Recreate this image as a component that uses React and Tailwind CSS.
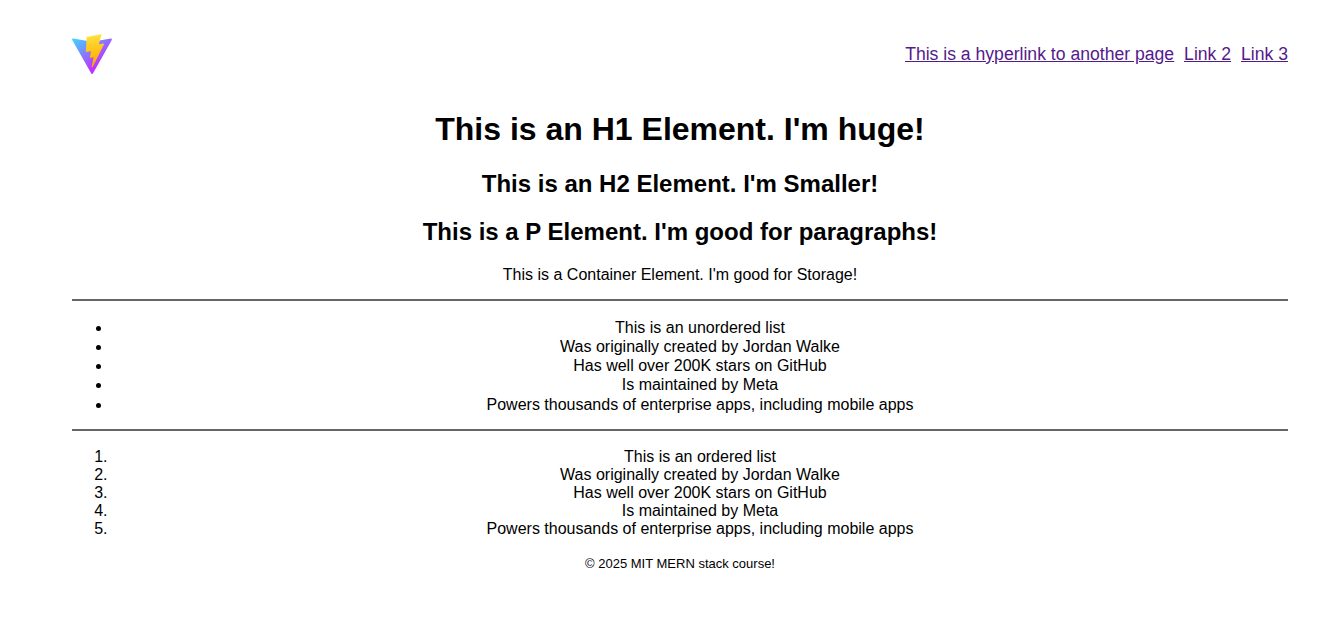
const font = { fontFamily: '"Liberation Sans", Arial, sans-serif' };

const items = [
  "Was originally created by Jordan Walke",
  "Has well over 200K stars on GitHub",
  "Is maintained by Meta",
  "Powers thousands of enterprise apps, including mobile apps",
];

function ViteLogo() {
  return (
    <svg width="40" height="40" viewBox="0 0 256 257">
      <defs>
        <linearGradient id="viteA" x1="-.828%" x2="57.636%" y1="7.652%" y2="78.411%">
          <stop offset="0%" stopColor="#41D1FF" />
          <stop offset="100%" stopColor="#BD34FE" />
        </linearGradient>
        <linearGradient id="viteB" x1="43.376%" x2="50.316%" y1="2.242%" y2="89.03%">
          <stop offset="0%" stopColor="#FFEA83" />
          <stop offset="8.333%" stopColor="#FFDD35" />
          <stop offset="100%" stopColor="#FFA800" />
        </linearGradient>
      </defs>
      <path
        fill="url(#viteA)"
        d="M255.153 37.938 134.897 252.976c-2.483 4.44-8.862 4.466-11.382.048L.875 37.958c-2.746-4.814 1.371-10.646 6.827-9.67l120.385 21.517a6.537 6.537 0 0 0 2.322-.004l117.867-21.483c5.438-.991 9.574 4.796 6.877 9.62Z"
      />
      <path
        fill="url(#viteB)"
        d="M185.432.063 96.44 17.501a3.268 3.268 0 0 0-2.634 3.014l-5.474 92.456a3.268 3.268 0 0 0 3.997 3.37l24.777-5.718c2.318-.535 4.413 1.507 3.936 3.838l-7.361 36.047c-.495 2.426 1.782 4.5 4.151 3.78l15.304-4.649c2.372-.72 4.652 1.36 4.15 3.788l-11.698 56.621c-.732 3.542 3.979 5.473 5.943 2.437l1.313-2.028 72.516-144.72c1.215-2.423-.88-5.186-3.54-4.672l-25.505 4.922c-2.396.462-4.435-1.77-3.759-4.114l16.646-57.705c.677-2.35-1.37-4.583-3.769-4.113Z"
      />
    </svg>
  );
}

export default function App() {
  return (
    <div style={font} className="bg-white text-black pl-[72px] pr-[46px] h-[641px] overflow-hidden text-center text-base">
      {/* Header */}
      <header className="flex items-center justify-between pt-[33px] h-[75px]">
        <ViteLogo />
        <nav className="flex gap-[10px] text-[17.6px] text-[#551a8b] underline">
          <a href="#">This is a hyperlink to another page</a>
          <a href="#">Link 2</a>
          <a href="#">Link 3</a>
        </nav>
      </header>

      <h1 className="mt-[36px] text-[32px] leading-[37px] font-bold">This is an H1 Element. I'm huge!</h1>
      <h2 className="mt-[22px] text-2xl leading-[28px] font-bold">This is an H2 Element. I'm Smaller!</h2>
      <p className="mt-[20px] text-2xl leading-[28px] font-bold">This is a P Element. I'm good for paragraphs!</p>
      <div className="mt-[20px] leading-[18px]">This is a Container Element. I'm good for Storage!</div>

      <hr className="mt-[15px] border-t-2 border-[#666]" />
      <ul className="mt-[16.7px] list-disc pl-10 leading-[19.25px]">
        <li>This is an unordered list</li>
        {items.map((item) => (
          <li key={item}>{item}</li>
        ))}
      </ul>

      <hr className="mt-[15.3px] border-t-2 border-[#666]" />
      <ol className="mt-[17px] list-decimal pl-10 leading-[18px]">
        <li>This is an ordered list</li>
        {items.map((item) => (
          <li key={item}>{item}</li>
        ))}
      </ol>

      <footer className="mt-[18px] text-[13px] leading-[15px]">© 2025 MIT MERN stack course!</footer>
    </div>
  );
}
